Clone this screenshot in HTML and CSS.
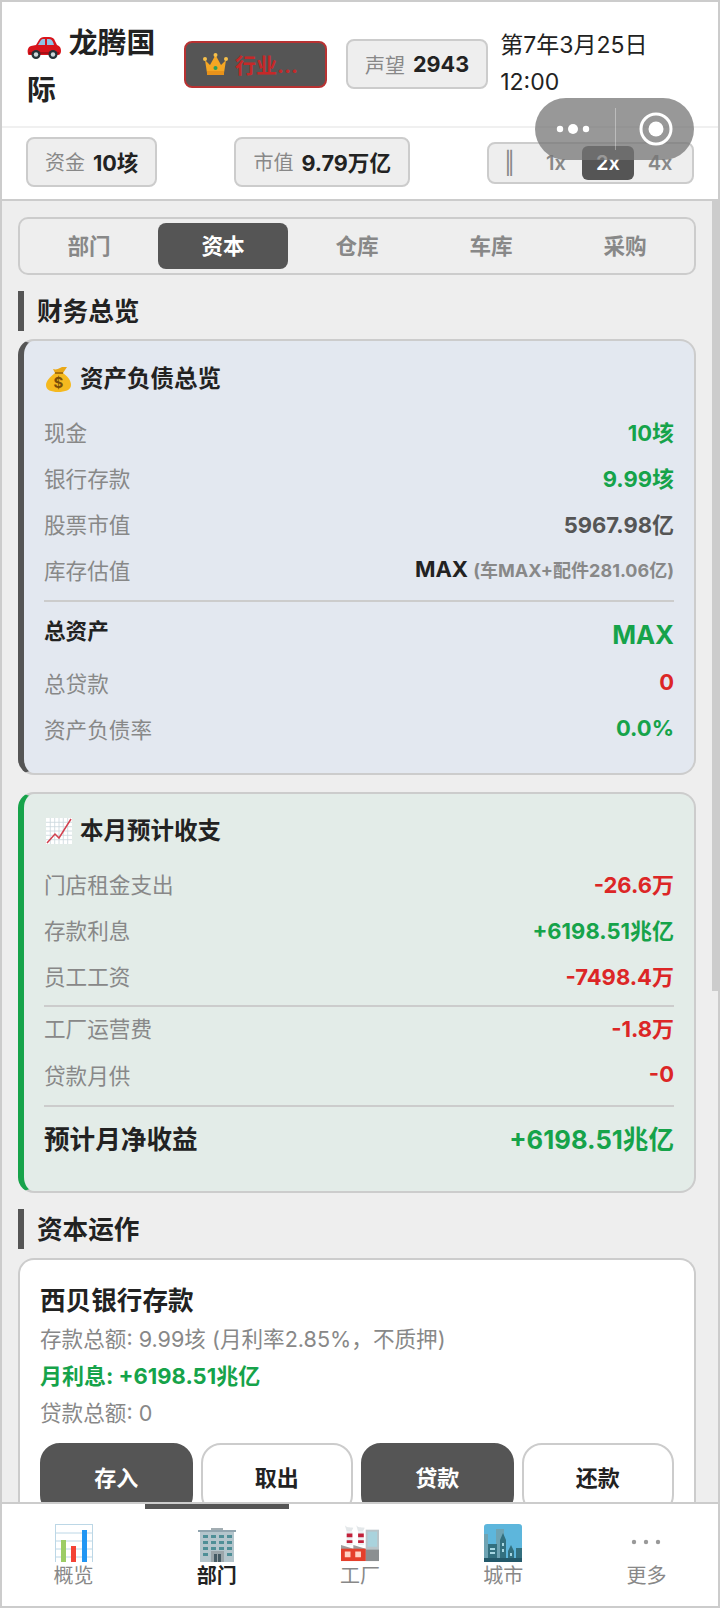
FILE: index.html
```html
<!DOCTYPE html>
<html lang="zh">
<head>
<meta charset="utf-8">
<title>龙腾国际</title>
<link rel="stylesheet" href="styles.css">
</head>
<body>
<div class="app">
  <header class="header">
    <div class="top-row">
      <div class="brand"><svg class="ico-car" viewBox="0 0 34 22"><path d="M1 17c-1-4 0-7 3-8l5-1 3-5c1-2 3-3 5-3h5c3 0 5 1 6 4l2 4c3 1 4 3 4 6 0 2-1 4-3 4H4c-2 0-3 0-3-1z" fill="#d8141c"/><path d="M11 8l3-5c1-1 1-1 3-1h1v6zM20 2h2c2 0 3 1 4 3l1 3h-7z" fill="#8fc4e6"/><path d="M2 15h30v2H2z" fill="#a80f16"/><circle cx="9" cy="17.500" r="4.500" fill="#263238"/><circle cx="9" cy="17.500" r="2.200" fill="#cfd8dc"/><circle cx="26" cy="17.500" r="4.500" fill="#263238"/><circle cx="26" cy="17.500" r="2.200" fill="#cfd8dc"/></svg> 龙腾国际</div>
      <div class="rank"><svg class="ico-crown" viewBox="0 0 25 23"><path d="M2 7l5 5 5.500-10L18 12l5-5-2 13H4z" fill="#f5a623"/><path d="M4 18h17v4H4z" fill="#e8921a"/><circle cx="2" cy="6" r="2" fill="#f7c04a"/><circle cx="12.500" cy="2" r="2" fill="#f7c04a"/><circle cx="23" cy="6" r="2" fill="#f7c04a"/><circle cx="12.500" cy="15" r="2" fill="#2a9d5c"/></svg> <span class="rank-text">行业...</span></div>
      <div class="chip">声望 <b>2943</b></div>
      <div class="date">第7年3月25日 12:00</div>
    </div>
    <div class="stat-row">
      <div class="chip">资金 <b>10垓</b></div>
      <div class="chip">市值 <b>9.79万亿</b></div>
      <div class="speed">
        <span class="speed-btn pause">‖</span>
        <span class="speed-btn">1x</span>
        <span class="speed-btn on">2x</span>
        <span class="speed-btn">4x</span>
      </div>
    </div>
    <div class="capsule">
      <svg class="capsule-dots" viewBox="0 0 34 12"><circle cx="4" cy="6" r="3.200"/><circle cx="17" cy="6" r="5"/><circle cx="30" cy="6" r="3.200"/></svg>
      <span class="capsule-line"></span>
      <svg class="capsule-ring" viewBox="0 0 34 34"><circle cx="17" cy="17" r="15" fill="none" stroke="#fff" stroke-width="3"/><circle cx="17" cy="17" r="7.500" fill="#fff"/></svg>
    </div>
  </header>

  <div class="body">
    <main class="content">
      <nav class="tabs">
        <span class="tab">部门</span>
        <span class="tab on">资本</span>
        <span class="tab">仓库</span>
        <span class="tab">车库</span>
        <span class="tab">采购</span>
      </nav>

      <h2 class="section">财务总览</h2>

      <section class="card card-blue">
        <h3 class="card-title"><svg class="ico-title" viewBox="0 0 26 26"><path d="M9 7C4 11 0 15 0 19c0 5 5 7 12 7s13-2 13-7c0-5-4-9-8-12z" fill="#f5b91f"/><path d="M9 7L7 3c3 1 5 0 7-1l2-1 5 0-4 6z" fill="#eaa817"/><path d="M9 7h8" stroke="#a8720d" stroke-width="2"/><text x="12.500" y="22" class="dollar">$</text></svg> 资产负债总览</h3>
        <div class="row"><span class="k">现金</span><span class="v green">10垓</span></div>
        <div class="row"><span class="k">银行存款</span><span class="v green">9.99垓</span></div>
        <div class="row"><span class="k">股票市值</span><span class="v gray">5967.98亿</span></div>
        <div class="row"><span class="k">库存估值</span><span class="v dark">MAX <small>(车MAX+配件281.06亿)</small></span></div>
        <div class="row total-row"><span class="total-k">总资产</span><span class="total-v green">MAX</span></div>
        <div class="row"><span class="k">总贷款</span><span class="v red">0</span></div>
        <div class="row"><span class="k">资产负债率</span><span class="v green">0.0%</span></div>
      </section>

      <section class="card card-green">
        <h3 class="card-title"><svg class="ico-title" viewBox="0 0 26 26"><path d="M0 0h26v26H0z" fill="#fff"/><path d="M0 4.300h26M0 8.700h26M0 13h26M0 17.300h26M0 21.700h26M4.300 0v26M8.700 0v26M13 0v26M17.300 0v26M21.700 0v26" stroke="#c9d6dc" stroke-width=".8"/><path d="M1 25l8-9 4 4L25 1" fill="none" stroke="#d2404f" stroke-width="1.500"/></svg> 本月预计收支</h3>
        <div class="row"><span class="k">门店租金支出</span><span class="v red">-26.6万</span></div>
        <div class="row"><span class="k">存款利息</span><span class="v green">+6198.51兆亿</span></div>
        <div class="row"><span class="k">员工工资</span><span class="v red">-7498.4万</span></div>
        <div class="row ruled"><span class="k">工厂运营费</span><span class="v red">-1.8万</span></div>
        <div class="row"><span class="k">贷款月供</span><span class="v red">-0</span></div>
        <div class="row net-row"><span class="net-k">预计月净收益</span><span class="net-v green">+6198.51兆亿</span></div>
      </section>

      <h2 class="section">资本运作</h2>

      <section class="bank">
        <h3 class="bank-title">西贝银行存款</h3>
        <p class="bank-line">存款总额: 9.99垓 (月利率2.85%，不质押)</p>
        <p class="bank-line strong green">月利息: +6198.51兆亿</p>
        <p class="bank-line">贷款总额: 0</p>
        <div class="actions">
          <span class="btn dark-btn">存入</span>
          <span class="btn">取出</span>
          <span class="btn dark-btn">贷款</span>
          <span class="btn">还款</span>
        </div>
      </section>
    </main>
    <div class="scrollbar"><div class="thumb"></div></div>
  </div>

  <nav class="nav">
    <div class="nav-item">
      <svg class="nav-ico" viewBox="0 0 38 38"><path d="M0 0h38v38H0z" fill="#fff"/><path d="M0 .5h38M0 9h38M0 17h38M0 25h38M0 33h38M.5 0v38M37.500 0v38" stroke="#bcd7e6" stroke-width="1"/><path d="M6 16h5v22H6z" fill="#9ccc65"/><path d="M16 22h5v16h-5z" fill="#f44336"/><path d="M27 6h5v32h-5z" fill="#2196f3"/></svg>
      <span>概览</span>
    </div>
    <div class="nav-item active">
      <svg class="nav-ico" viewBox="0 0 38 38"><path d="M13 4h12v3H13z" fill="#a2adb2"/><path d="M0 6h38v2H0z" fill="#90a4ae"/><path d="M2 8h34v30H2z" fill="#b4c5cc"/><path d="M5 11h5v3H5zM13 11h5v3h-5zM21 11h5v3h-5zM29 11h5v3h-5zM5 17h5v3H5zM13 17h5v3h-5zM21 17h5v3h-5zM29 17h5v3h-5zM5 23h5v3H5zM13 23h5v3h-5zM21 23h5v3h-5zM29 23h5v3h-5zM5 29h5v3H5zM29 29h5v3h-5z" fill="#4f8f97"/><path d="M13 27h13v11H13z" fill="#9aa5aa"/><path d="M16 30h3v8h-3zM20 30h3v8h-3z" fill="#455a64"/></svg>
      <span>部门</span>
    </div>
    <div class="nav-item">
      <svg class="nav-ico" viewBox="0 0 40 38"><path d="M26 5h14v33H26z" fill="#b9c4c8"/><path d="M28 7h10v16H28z" fill="#a9d3dd"/><path d="M26 26h14v12H26z" fill="#8b8f91"/><path d="M4 0c2 3 4 2 9 3l-2 4H6zM16 0c2 3 4 2 9 3l-2 4h-5z" fill="#e3e7e9"/><path d="M6 7h6v14H6zM18 7h6v14h-6z" fill="#eceff1"/><path d="M6 9h6v4H6zM18 9h6v4h-6zM6 16h6v3H6zM18 16h6v3h-6z" fill="#c2213a"/><path d="M0 21l13 4 0-4 13 4v13H0z" fill="#9e9e9e"/><path d="M0 25h26v13H0z" fill="#e53f2b"/><path d="M4 28h6v6H4zM15 28h6v6h-6z" fill="#ffd2c4"/></svg>
      <span>工厂</span>
    </div>
    <div class="nav-item">
      <svg class="nav-ico" viewBox="0 0 38 38"><rect width="38" height="38" rx="3" fill="#5db6dc"/><path d="M0 10h4v28H0zM12 5h8v33h-8z" fill="#6ea3b3"/><path d="M4 20h9v18H4zM16 16l3-7 3 7v22h-6zM24 27l3-6 3 6v11h-6zM32 24h6v14h-6z" fill="#33707f"/><path d="M0 34h38v4H0z" fill="#24596a"/><path d="M6 24h5v2H6zM6 28h5v2H6zM18 19h2v3h-2zM18 25h2v3h-2zM26 29h2v3h-2z" fill="#a7d7e2"/></svg>
      <span>城市</span>
    </div>
    <div class="nav-item">
      <svg class="nav-ico" viewBox="0 0 38 38"><circle cx="7" cy="18" r="2.200" fill="#999"/><circle cx="19" cy="18" r="2.200" fill="#999"/><circle cx="31" cy="18" r="2.200" fill="#999"/></svg>
      <span>更多</span>
    </div>
    <span class="nav-mark"></span>
  </nav>
</div>
</body>
</html>
```

FILE: styles.css
```css
* { box-sizing: border-box; margin: 0; padding: 0; }
html, body { width: 720px; height: 1608px; overflow: hidden; }
body { font-family: Inter, "Noto Sans CJK SC", sans-serif; color: #222; background: #fff; }

.app { width: 720px; height: 1608px; border: 2px solid #ccc; display: flex; flex-direction: column; overflow: hidden; background: #fff; }

.header { position: relative; flex: none; border-bottom: 2px solid #ccc; }
.top-row { height: 126px; display: flex; align-items: center; padding: 0 24px 0 25px; border-bottom: 2px solid #f0f0f0; }
.brand { width: 157px; margin-top: 3px; padding-right: 12px; font-size: 28.800px; font-weight: 700; line-height: 47px; flex: none; }
.ico-car { width: 34px; height: 22px; vertical-align: -6px; margin-right: 1px; }
.rank { width: 143px; height: 47px; flex: none; margin-right: 19px; padding-left: 17px; background: #555; border: 2px solid #b83232; border-radius: 8px; display: flex; align-items: center; gap: 7px; font-size: 21px; font-weight: 700; color: #c62828; white-space: nowrap; }
.ico-crown { width: 25px; height: 23px; flex: none; }
.chip { flex: none; height: 50px; padding: 0 17px; background: #eee; border: 2px solid #ccc; border-radius: 8px; display: flex; align-items: center; gap: 8px; font-size: 20px; color: #888; }
.chip b { font-size: 21.600px; font-weight: 700; color: #222; }
.date { margin-left: 12px; width: 170px; font-size: 23px; line-height: 37px; color: #222; }

.stat-row { height: 71px; display: flex; align-items: center; justify-content: space-between; padding: 0 24px 4px; }
.speed { width: 207px; height: 42px; margin-top: 3px; background: #eee; border: 2px solid #ccc; border-radius: 8px; display: flex; align-items: center; padding-right: 6px; }
.speed-btn { width: 52px; flex: none; height: 34px; border-radius: 6px; text-align: center; line-height: 34px; font-size: 20px; font-weight: 600; color: #888; }
.speed-btn.on { background: #555; color: #fff; }
.speed-btn.pause { width: 41px; font-size: 22px; font-weight: 400; }

.capsule { position: absolute; left: 533px; top: 96px; width: 159px; height: 62px; border-radius: 31px; background: rgba(118, 118, 118, .75); display: flex; align-items: center; }
.capsule-dots { width: 34px; height: 12px; margin-left: 21px; fill: #fff; }
.capsule-line { width: 1px; height: 42px; margin-left: 25px; background: rgba(255, 255, 255, .35); }
.capsule-ring { width: 34px; height: 34px; margin-left: 23px; }

.body { flex: 1; min-height: 0; display: flex; background: #eee; }
.content { flex: 1; min-width: 0; padding: 16px 16px 0; overflow: hidden; }
.scrollbar { width: 6px; flex: none; }
.thumb { height: 790px; background: #ccc; }

.tabs { height: 58px; border: 2px solid #ccc; border-radius: 10px; display: flex; align-items: center; gap: 4px; padding: 0 4px; background: #eee; }
.tab { flex: 1; height: 46px; border-radius: 8px; text-align: center; line-height: 46px; font-size: 21.600px; font-weight: 600; color: #888; }
.tab.on { background: #555; color: #fff; }

.section { height: 40px; margin: 16px 0 8px; border-left: 6px solid #555; padding-left: 13px; font-size: 25.600px; font-weight: 700; line-height: 41px; color: #222; }

.card { border: 2px solid #ccc; border-radius: 16px; padding: 20px 20px 0 20px; }
.card-blue { height: 436px; padding-top: 19px; background: #e3e8f0; border-left: 6px solid #555; }
.card-green { height: 401px; margin-top: 17px; padding-top: 18px; background: #e3ece8; border-left: 6px solid #16a34a; }
.card-title { height: 38px; font-size: 23.500px; font-weight: 700; line-height: 38px; color: #222; display: flex; align-items: center; gap: 8px; margin-bottom: 10px; }
.ico-title { width: 26px; height: 26px; flex: none; margin-left: 2px; }
.dollar { font: 700 15px Inter, sans-serif; fill: #7a4e08; text-anchor: middle; }

.row { height: 46px; display: flex; align-items: center; justify-content: space-between; }
.k { font-size: 21.600px; color: #888; }
.v { font-size: 22px; font-weight: 700; }
.v small { font-size: 18px; font-weight: 700; color: #888; }
.green { color: #16a34a; }
.red { color: #dc2626; }
.gray { color: #555; }
.dark { color: #222; }

.total-row { height: 59px; margin-top: 8px; border-top: 2px solid #ccc; align-items: flex-start; padding-top: 9px; }
.total-k { font-size: 21.600px; font-weight: 700; color: #222; line-height: 28px; margin-top: 6px; }
.total-v { font-size: 25.600px; font-weight: 700; line-height: 44px; margin-top: 2px; }

.ruled { height: 46px; margin-top: 7px; border-top: 2px solid #ccc; padding-bottom: 4px; }
.net-row { height: 62px; margin-top: 8px; border-top: 2px solid #ccc; }
.net-k { font-size: 25.600px; font-weight: 700; color: #222; }
.net-v { font-size: 25.600px; font-weight: 700; }

.bank { background: #fff; border: 2px solid #ccc; border-bottom: 0; border-radius: 16px 16px 0 0; padding: 21px 20px 0; margin-top: 9px; height: 300px; }
.bank-title { font-size: 25.600px; font-weight: 700; line-height: 40px; color: #222; }
.bank-line { font-size: 21.600px; line-height: 37px; color: #888; }
.bank-line.strong { font-size: 22px; font-weight: 700; color: #16a34a; }
.actions { margin-top: 11px; display: flex; gap: 8px; }
.btn { flex: 1; height: 72px; border: 2px solid #ccc; border-radius: 20px; text-align: center; font-size: 22px; font-weight: 700; line-height: 67px; color: #222; background: #fff; }
.btn.dark-btn { background: #555; border-color: #555; color: #fff; }

.nav { position: relative; flex: none; height: 104px; border-top: 2px solid #ccc; display: flex; background: #fff; }
.nav-item { flex: 1; display: flex; flex-direction: column; align-items: center; padding-top: 20px; font-size: 20px; line-height: 28px; color: #888; }
.nav-item.active { color: #222; font-weight: 700; }
.nav-ico { width: 38px; height: 38px; flex: none; }
.nav-mark { position: absolute; left: 143px; top: 0; width: 144px; height: 5px; background: #555; }
```
